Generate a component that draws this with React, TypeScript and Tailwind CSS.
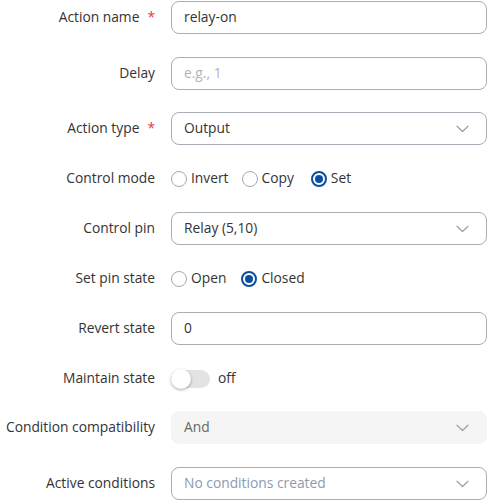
import React from "react";

function Chevron() {
	return (
		<svg width="13" height="8" viewBox="0 0 13 8" fill="none" className="shrink-0">
			<path d="M1 1.2L6.5 6.5L12 1.2" stroke="#9aa0a8" strokeWidth="1.2" strokeLinecap="round" strokeLinejoin="round" />
		</svg>
	);
}

function Row({ label, required, className, children }: { label: string; required?: boolean; className?: string; children: React.ReactNode }) {
	return (
		<div className={`flex items-center h-[33px] ${className ?? ""}`}>
			<div className="w-[155px] shrink-0 flex justify-end items-center text-[13.8px] text-[#333]">
				<span>{label}</span>
				{required && <span className="ml-[8px] text-[#e0403a]">*</span>}
			</div>
			<div className="flex-1 ml-4 flex items-center h-full">{children}</div>
		</div>
	);
}

function TextBox({ value, placeholder }: { value?: string; placeholder?: string }) {
	return (
		<div className="w-full h-full rounded-[8px] border border-[#a9adb5] px-[12px] flex items-center text-[13.8px]">
			{value ? <span className="text-[#333]">{value}</span> : <span className="text-[#b3b3b3]">{placeholder}</span>}
		</div>
	);
}

function Select({ value, muted, disabled }: { value: string; muted?: boolean; disabled?: boolean }) {
	return (
		<div
			className={`w-full h-full rounded-[8px] px-[12px] pr-[17px] flex items-center justify-between text-[13.8px] ${
				disabled ? "bg-[#f5f5f5] border border-[#f5f5f5]" : "border border-[#a9adb5]"
			}`}
		>
			<span className={muted ? "text-[#8d9bb0]" : disabled ? "text-[#666]" : "text-[#333]"}>{value}</span>
			<Chevron />
		</div>
	);
}

function Radio({ label, checked, className }: { label: string; checked?: boolean; className?: string }) {
	return (
		<div className={`flex items-center text-[13.8px] text-[#333] ${className ?? ""}`}>
			{checked ? (
				<span className="w-[16px] h-[16px] rounded-full border-2 border-[#0b4e9f] flex items-center justify-center">
					<span className="w-[8px] h-[8px] rounded-full bg-[#0b4e9f]" />
				</span>
			) : (
				<span className="w-[16px] h-[16px] rounded-full border border-[#a4a9b0]" />
			)}
			<span className="ml-[4px]">{label}</span>
		</div>
	);
}

export default function App() {
	return (
		<div className="w-[500px] h-[500px] overflow-hidden bg-white pt-px pr-[13px]" style={{ fontFamily: '"Open Sans", sans-serif' }}>
			<Row label="Action name" required>
				<TextBox value="relay-on" />
			</Row>
			<Row label="Delay" className="mt-[23px]">
				<TextBox placeholder="e.g., 1" />
			</Row>
			<Row label="Action type" required className="mt-[22px]">
				<Select value="Output" />
			</Row>
			<Row label="Control mode" className="mt-[17px]">
				<Radio label="Invert" />
				<Radio label="Copy" className="ml-[13px]" />
				<Radio label="Set" checked className="ml-[17px]" />
			</Row>
			<Row label="Control pin" className="mt-[17px]">
				<Select value="Relay (5,10)" />
			</Row>
			<Row label="Set pin state" className="mt-[17px]">
				<Radio label="Open" />
				<Radio label="Closed" checked className="ml-[15px]" />
			</Row>
			<Row label="Revert state" className="mt-[17px]">
				<TextBox value="0" />
			</Row>
			<Row label="Maintain state" className="mt-[17px]">
				<div className="relative w-[39px] h-[18px] rounded-full bg-[#e3e3e3]">
					<span className="absolute left-0 top-[-1px] w-[20px] h-[20px] rounded-full bg-white shadow-[0_1px_3px_rgba(0,0,0,0.35)]" />
				</div>
				<span className="ml-[8px] text-[13.8px] text-[#333]">off</span>
			</Row>
			<Row label="Condition compatibility" className="mt-[16px]">
				<Select value="And" disabled />
			</Row>
			<Row label="Active conditions" className="mt-[23px]">
				<Select value="No conditions created" muted />
			</Row>
		</div>
	);
}
